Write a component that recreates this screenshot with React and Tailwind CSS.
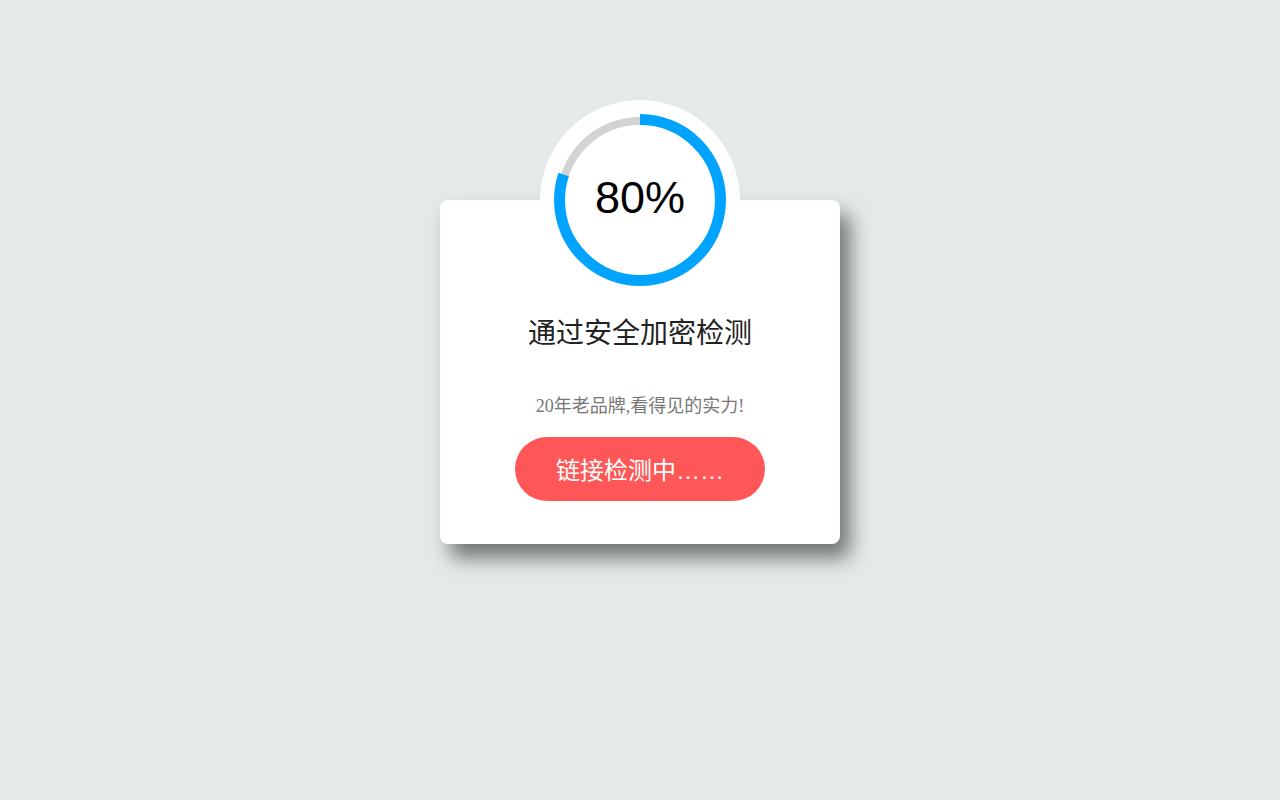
import React from "react";

export default function App() {
  const r = 80.5;
  const c = 2 * Math.PI * r;
  return (
    <div className="min-h-[800px] w-full bg-[#e5e9ea] flex flex-col items-center pt-[200px]">
      <div className="w-[400px] bg-white rounded-lg shadow-[10px_14px_20px_rgba(0,0,0,0.5)] flex flex-col items-center pb-[43px]">
        <div className="w-[200px] h-[200px] -mt-[100px] rounded-full bg-white flex items-center justify-center relative">
          <svg width="200" height="200" viewBox="0 0 200 200" className="absolute inset-0">
            <circle cx="100" cy="100" r="79" fill="none" stroke="#d3d3d3" strokeWidth="8" />
            <circle
              cx="100"
              cy="100"
              r={r}
              fill="none"
              stroke="#00a4ff"
              strokeWidth="11"
              strokeDasharray={`${c * 0.8} ${c}`}
              transform="rotate(-90 100 100)"
            />
          </svg>
          <span className="relative text-[45px] leading-none text-black font-['Liberation_Sans',Arial,sans-serif] -mt-[6px]">80%</span>
        </div>
        <div className="mt-[13px] text-[28px] leading-[42px] text-[#222] font-['Liberation_Sans','Noto_Sans_CJK_SC',sans-serif]">
          通过安全加密检测
        </div>
        <div className="mt-[38px] text-[18px] leading-[27px] text-[#777] font-['Liberation_Serif','Noto_Sans_CJK_SC',serif]">
          20年老品牌,看得见的实力!
        </div>
        <div className="mt-[17px] w-[250px] h-[64px] rounded-full bg-[#ff5757] flex items-center justify-center pt-[3px] text-white text-[24px] font-['Liberation_Sans','Noto_Sans_CJK_SC',sans-serif]">
          链接检测中……
        </div>
      </div>
    </div>
  );
}
